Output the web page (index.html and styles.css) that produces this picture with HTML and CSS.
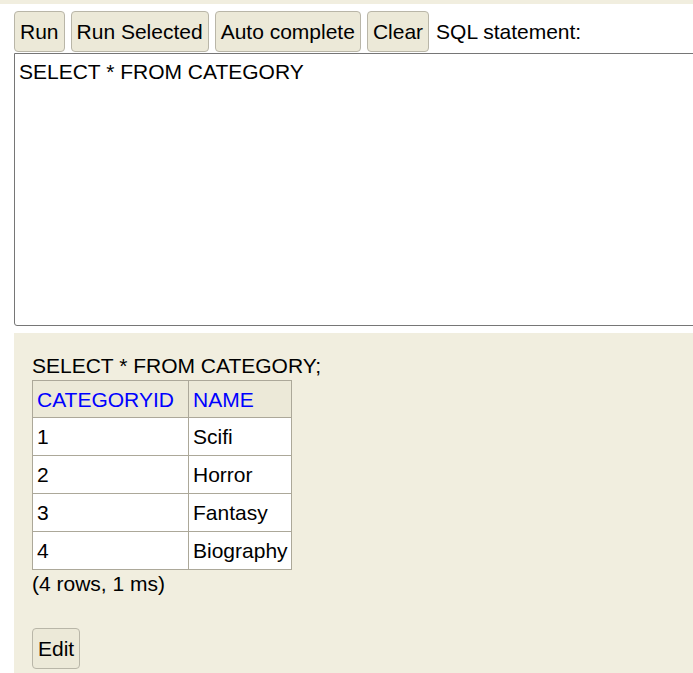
FILE: index.html
```html
<!DOCTYPE html>
<html>
<head>
<meta charset="utf-8">
<link rel="stylesheet" href="styles.css">
</head>
<body>
<div class="topband"></div>
<div class="query">
  <div class="toolbar">
    <button class="btn">Run</button>
    <button class="btn">Run Selected</button>
    <button class="btn">Auto complete</button>
    <button class="btn">Clear</button>
    <span class="label">SQL statement:</span>
  </div>
  <textarea class="sql">SELECT * FROM CATEGORY</textarea>
</div>
<div class="result">
  <div class="stmt">SELECT * FROM CATEGORY;</div>
  <table class="rs">
    <tr><th class="c1">CATEGORYID</th><th>NAME</th></tr>
    <tr><td>1</td><td>Scifi</td></tr>
    <tr><td>2</td><td>Horror</td></tr>
    <tr><td>3</td><td>Fantasy</td></tr>
    <tr><td>4</td><td>Biography</td></tr>
  </table>
  <div class="info">(4 rows, 1 ms)</div>
  <button class="btn edit">Edit</button>
</div>
</body>
</html>
```
FILE: styles.css
```css
html, body {
  margin: 0;
  padding: 0;
  background: #ffffff;
  font-family: "Liberation Sans", Arial, sans-serif;
  font-size: 21px;
  color: #000;
  overflow: hidden;
  width: 693px;
  height: 673px;
}
.topband {
  height: 4px;
  background: #f1eedf;
}
.query {
  padding: 7px 0 0 14px;
}
.toolbar {
  display: flex;
  align-items: center;
  gap: 6px;
  height: 41px;
}
.btn {
  font-family: "Liberation Sans", Arial, sans-serif;
  font-size: 21px;
  color: #000;
  background: #ece9d8;
  border: 1px solid #b9b6a8;
  border-radius: 4px;
  height: 41px;
  padding: 0 5px;
  margin: 0;
  line-height: 23px;
}
.label {
  margin-left: 1px;
  line-height: 23px;
}
.sql {
  display: block;
  box-sizing: border-box;
  margin: 1px 0 0 0;
  width: 700px;
  height: 273px;
  border: 1px solid #767676;
  border-radius: 0 0 0 3px;
  padding: 6px 4px;
  font-family: "Liberation Sans", Arial, sans-serif;
  font-size: 21px;
  line-height: 23px;
  resize: none;
  outline: none;
}
.result {
  box-sizing: border-box;
  margin: 7px 0 0 14px;
  background: #f1eedf;
  padding: 21px 0 0 18px;
  height: 340px;
}
.stmt {
  line-height: 23px;
}
.rs {
  border-collapse: collapse;
  margin-top: 3px;
}
.rs th, .rs td {
  border: 1px solid #aca899;
  padding: 7px 3px 7px 4px;
  line-height: 23px;
  text-align: left;
  font-weight: normal;
}
.rs th {
  background: #ece9d8;
  color: #0000ff;
  padding-bottom: 6px;
}
.rs td {
  background: #ffffff;
}
.rs .c1 {
  width: 148px;
}
.info {
  line-height: 23px;
  margin-top: 2px;
}
.edit {
  margin-top: 33px;
  padding: 0 5px;
}
```
